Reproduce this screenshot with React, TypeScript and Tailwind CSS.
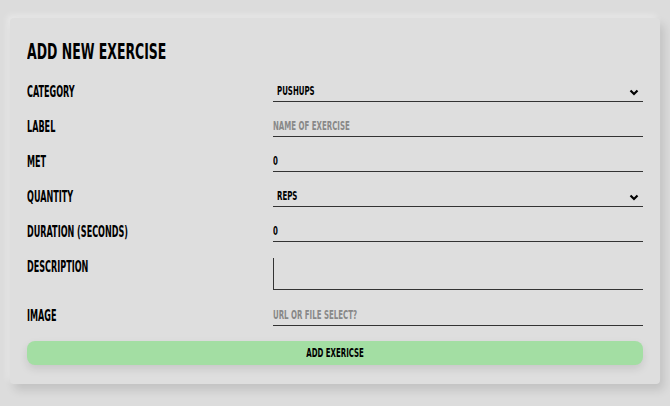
import React from 'react';

const font = "font-['DejaVu_Sans_Condensed','Liberation_Sans_Narrow',sans-serif]";

interface RowProps {
  label: string;
  children: React.ReactNode;
  tall?: boolean;
}

const Row: React.FC<RowProps> = ({ label, children, tall }) => (
  <div className={`flex ${tall ? 'h-[49px]' : 'h-[35px]'}`}>
    <div className="w-[40%] pt-[5px] text-[15px] font-bold leading-[20px] text-black">
      <span className="inline-block origin-left scale-x-[0.6] whitespace-nowrap">{label}</span>
    </div>
    <div className="w-[60%]">{children}</div>
  </div>
);

const Chevron = () => (
  <svg className="h-[10px] w-[10px]" viewBox="0 0 10 10" fill="none" stroke="black" strokeWidth={2.2}>
    <path d="M1.5 3.5 L5 7 L8.5 3.5" />
  </svg>
);

const SelectBox: React.FC<{ value: string }> = ({ value }) => (
  <div className="flex h-[25px] items-end justify-between border-b-[1.5px] border-[#333] pb-[2px] pl-[4px] pr-[4px]">
    <span className="inline-block origin-left scale-x-[0.6] text-[13px] font-bold leading-[16px] text-black">{value}</span>
    <span className="mb-[2px]"><Chevron /></span>
  </div>
);

const TextInput: React.FC<{ value?: string; placeholder?: string }> = ({ value, placeholder }) => (
  <div className="flex h-[25px] items-end border-b-[1.5px] border-[#333] pb-[2px]">
    {value ? (
      <span className="inline-block origin-left scale-x-[0.6] text-[13px] font-bold leading-[16px] text-black">{value}</span>
    ) : (
      <span className="inline-block origin-left scale-x-[0.6] whitespace-nowrap text-[13px] font-bold leading-[16px] text-[#888]">{placeholder}</span>
    )}
  </div>
);

export default function App() {
  return (
    <div className={`min-h-[406px] bg-[#dcdcdc] px-[10px] pt-[18px] ${font}`}>
      <div className="rounded-[4px] bg-[#dedede] px-[17px] pb-[19px] pt-[22px] shadow-[4px_6px_10px_rgba(0,0,0,0.12),-3px_-3px_6px_rgba(255,255,255,0.35)]">
        <h1 className="mb-[13px] text-[22px] font-bold leading-[24px] text-black">
          <span className="inline-block origin-left scale-x-[0.63] whitespace-nowrap">ADD NEW EXERCISE</span>
        </h1>
        <Row label="CATEGORY">
          <SelectBox value="PUSHUPS" />
        </Row>
        <Row label="LABEL">
          <TextInput placeholder="NAME OF EXERCISE" />
        </Row>
        <Row label="MET">
          <TextInput value="0" />
        </Row>
        <Row label="QUANTITY">
          <SelectBox value="REPS" />
        </Row>
        <Row label="DURATION (SECONDS)">
          <TextInput value="0" />
        </Row>
        <Row label="DESCRIPTION" tall>
          <div className="mt-[6px] h-[32px] border-b-[1.5px] border-l-[1.5px] border-[#333]" />
        </Row>
        <Row label="IMAGE">
          <TextInput placeholder="URL OR FILE SELECT?" />
        </Row>
        <button className="mt-[5px] flex h-[24px] w-full items-center justify-center rounded-[8px] bg-[#a3dea3] text-[13px] font-bold text-black shadow-[0_4px_8px_rgba(0,0,0,0.1)]">
          <span className="inline-block scale-x-[0.6]">ADD EXERICSE</span>
        </button>
      </div>
    </div>
  );
}
